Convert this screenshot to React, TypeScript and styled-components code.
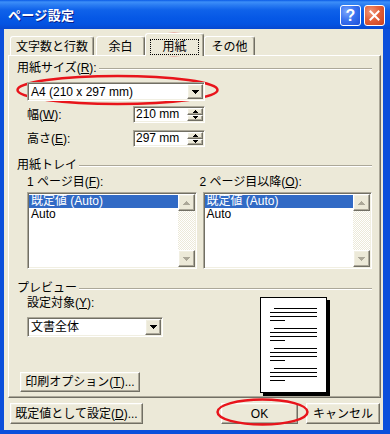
import React from 'react';
import styled, { createGlobalStyle, css } from 'styled-components';

const FONT = `"Liberation Sans", "Noto Sans CJK JP", sans-serif`;

const GlobalStyle = createGlobalStyle`
  html, body { margin: 0; padding: 0; background: #ffffff; }
  body { font-family: ${FONT}; font-size: 12px; }
  *, *::before, *::after { box-sizing: border-box; }
`;

const sunken = css`
  border: 1px solid;
  border-color: #aca899 #ffffff #ffffff #aca899;
  box-shadow: inset 1px 1px #716f64, inset -1px -1px #f1efe2;
`;

const raised = css`
  border: 1px solid;
  border-color: #ffffff #716f64 #716f64 #ffffff;
  box-shadow: inset -1px -1px #aca899, inset 1px 1px #f1efe2;
`;

const Window = styled.div`
  position: relative;
  width: 390px;
  height: 434px;
  background: #0b4fdb;
  display: flex;
  flex-direction: column;
  font-family: ${FONT};
  font-size: 12px;
  color: #000;
  overflow: hidden;
`;

const TitleBar = styled.div`
  height: 29px;
  flex: none;
  display: flex;
  align-items: center;
  padding: 2px 5px 0 8px;
  background: linear-gradient(
    180deg,
    #0a5ae6 0px,
    #3d8ff8 2px,
    #2a7cf2 5px,
    #0f62ea 10px,
    #0658e6 18px,
    #0454e2 24px,
    #0748d0 29px
  );
`;

const Title = styled.div`
  flex: 1;
  color: #fff;
  font-weight: bold;
  font-size: 13px;
  letter-spacing: 0.3px;
  line-height: 15px;
  text-shadow: 1px 1px #0a1e8a;
`;

const CaptionButton = styled.div<{ $variant: 'help' | 'close' }>`
  width: 21px;
  height: 21px;
  border: 1px solid #ffffff;
  border-radius: 3px;
  display: flex;
  align-items: center;
  justify-content: center;
  margin-left: ${(p) => (p.$variant === 'close' ? '3px' : '0')};
  background: ${(p) =>
    p.$variant === 'close'
      ? 'radial-gradient(circle at 30% 30%, #f0977a 0%, #e2613b 45%, #c8401d 100%)'
      : 'radial-gradient(circle at 30% 30%, #7aa5fb 0%, #3b73f0 45%, #1b4fd9 100%)'};
`;

const HelpMark = styled.span`
  color: #fff;
  font-family: "Liberation Sans", sans-serif;
  font-weight: bold;
  font-size: 16px;
  line-height: 16px;
`;

const Body = styled.div`
  flex: 1;
  background: #ece9d8;
  margin: 0 7px 4px 4px;
  padding-top: 4px;
  display: flex;
  flex-direction: column;
`;

const TabRow = styled.div`
  position: relative;
  z-index: 2;
  height: 22px;
  display: flex;
  align-items: flex-end;
  gap: 2px;
  padding-left: 6px;
`;

const Tab = styled.div<{ $w: number; $active?: boolean }>`
  width: ${(p) => p.$w}px;
  height: ${(p) => (p.$active ? 23 : 19)}px;
  margin: ${(p) => (p.$active ? '0 -2px -1px' : '0')};
  padding-top: ${(p) => (p.$active ? 5 : 3)}px;
  background: #ece9d8;
  border-top: 1px solid #ffffff;
  border-left: 1px solid #ffffff;
  border-right: 1px solid #716f64;
  border-radius: 3px 3px 0 0;
  box-shadow: inset -1px 0 #aca899;
  text-align: center;
  line-height: 14px;
  white-space: nowrap;
`;

const FocusRect = styled.span`
  display: inline-block;
  padding: 0 11px;
  border: 1px dotted #000;
  line-height: 14px;
`;

const Panel = styled.div`
  position: relative;
  z-index: 1;
  height: 343px;
  margin: 0 2px 0 4px;
  border-top: 1px solid #ffffff;
  border-left: 1px solid #ffffff;
  border-right: 1px solid #716f64;
  border-bottom: 1px solid #716f64;
  box-shadow: inset -1px -1px #aca899;
  padding: 5px 8px 0 8px;
  display: flex;
  flex-direction: column;
`;

const GroupHeader = styled.div<{ $mt?: number }>`
  display: flex;
  align-items: center;
  height: 14px;
  line-height: 14px;
  gap: 2px;
  margin-top: ${(p) => p.$mt ?? 0}px;
  white-space: nowrap;
  &::after {
    content: '';
    flex: 1;
    margin-top: 2px;
    border-top: 1px solid #aca899;
    border-bottom: 1px solid #ffffff;
  }
`;

const Combo = styled.div<{ $w: number; $h: number; $mt: number }>`
  ${sunken};
  width: ${(p) => p.$w}px;
  height: ${(p) => p.$h}px;
  margin: ${(p) => p.$mt}px 0 0 10px;
  background: #fff;
  display: flex;
  align-items: center;
  padding: 0 1px 0 3px;
  line-height: 14px;
  white-space: nowrap;
`;

const ComboText = styled.span`
  flex: 1;
`;

const DropButton = styled.div`
  ${raised};
  width: 16px;
  align-self: stretch;
  margin: 1px 0;
  background: #ece9d8;
  display: flex;
  align-items: center;
  justify-content: center;
`;

const SizeRow = styled.div<{ $mt: number }>`
  display: flex;
  align-items: center;
  height: 17px;
  margin: ${(p) => p.$mt}px 0 0 10px;
  line-height: 14px;
`;

const SizeLabel = styled.div`
  width: 106px;
`;

const SpinBox = styled.div`
  ${sunken};
  width: 72px;
  height: 17px;
  background: #fff;
  display: flex;
  align-items: stretch;
  padding: 1px 1px 1px 2px;
  line-height: 13px;
`;

const SpinText = styled.span`
  flex: 1;
  align-self: center;
`;

const SpinButtons = styled.div`
  width: 16px;
  display: flex;
  flex-direction: column;
`;

const SpinButton = styled.div`
  ${raised};
  flex: 1;
  background: #ece9d8;
  display: flex;
  align-items: center;
  justify-content: center;
`;

const TrayRow = styled.div`
  display: flex;
  gap: 6px;
  margin: 3px 0 0 10px;
`;

const TrayColumn = styled.div`
  width: 170px;
  display: flex;
  flex-direction: column;
  gap: 3px;
`;

const FieldLabel = styled.div<{ $ml?: number; $mt?: number }>`
  height: 14px;
  line-height: 14px;
  white-space: nowrap;
  margin-left: ${(p) => p.$ml ?? 0}px;
  margin-top: ${(p) => p.$mt ?? 0}px;
`;

const ListBox = styled.div`
  ${sunken};
  height: 77px;
  background: #fff;
  display: flex;
  padding: 1px;
`;

const ListItems = styled.div`
  flex: 1;
  padding-top: 1px;
`;

const ListItem = styled.div<{ $selected?: boolean }>`
  height: 13px;
  line-height: 13px;
  padding-left: 2px;
  white-space: nowrap;
  background: ${(p) => (p.$selected ? '#316ac5' : 'transparent')};
  color: ${(p) => (p.$selected ? '#ffffff' : '#000000')};
`;

const ScrollBar = styled.div`
  width: 17px;
  display: flex;
  flex-direction: column;
`;

const ScrollButton = styled.div`
  ${raised};
  height: 17px;
  background: #ece9d8;
  display: flex;
  align-items: center;
  justify-content: center;
`;

const ScrollTrack = styled.div`
  flex: 1;
  background-color: #ffffff;
  background-image: conic-gradient(#ece9d8 25%, #ffffff 0 50%, #ece9d8 0 75%, #ffffff 0);
  background-size: 2px 2px;
`;

const PreviewRow = styled.div`
  display: flex;
`;

const PreviewLeft = styled.div`
  width: 243px;
  display: flex;
  flex-direction: column;
`;

const Button = styled.div<{ $w: number; $h: number; $mt?: number; $ml?: number }>`
  ${raised};
  width: ${(p) => p.$w}px;
  height: ${(p) => p.$h}px;
  margin-top: ${(p) => p.$mt ?? 0}px;
  margin-left: ${(p) => p.$ml ?? 0}px;
  background: #ece9d8;
  display: flex;
  align-items: center;
  justify-content: center;
  line-height: 14px;
  white-space: nowrap;
`;

const PreviewPage = styled.div`
  width: 67px;
  height: 96px;
  margin-top: 2px;
  background: #fff;
  border: 1px solid #000;
  box-shadow: 3px 3px 0 #000;
`;

const ButtonBar = styled.div`
  display: flex;
  align-items: center;
  margin-top: 5px;
  padding: 0 3px 0 6px;
`;

const Spacer = styled.div`
  flex: 1;
`;

const Annotations = styled.svg`
  position: absolute;
  left: 0;
  top: 0;
  pointer-events: none;
`;

const DownArrow = ({ color = '#000' }: { color?: string }) => (
  <svg width="7" height="4" viewBox="0 0 7 4" shapeRendering="crispEdges">
    <path fill={color} d="M0 0h7v1H0zM1 1h5v1H1zM2 2h3v1H2zM3 3h1v1H3z" />
  </svg>
);

const UpArrow = ({ color = '#000' }: { color?: string }) => (
  <svg width="7" height="4" viewBox="0 0 7 4" shapeRendering="crispEdges">
    <path fill={color} d="M0 3h7v1H0zM1 2h5v1H1zM2 1h3v1H2zM3 0h1v1H3z" />
  </svg>
);

const SmallUp = () => (
  <svg width="5" height="3" viewBox="0 0 5 3" shapeRendering="crispEdges">
    <path fill="#000" d="M0 2h5v1H0zM1 1h3v1H1zM2 0h1v1H2z" />
  </svg>
);

const SmallDown = () => (
  <svg width="5" height="3" viewBox="0 0 5 3" shapeRendering="crispEdges">
    <path fill="#000" d="M0 0h5v1H0zM1 1h3v1H1zM2 2h1v1H2z" />
  </svg>
);

const PageLines = () => {
  const groups = [0, 20, 40, 60];
  return (
    <svg width="65" height="94" viewBox="0 0 65 94" shapeRendering="crispEdges">
      {groups.map((g) => (
        <g key={g} fill="#000">
          <rect x="13" y={10 + g} width="43" height="1" />
          <rect x="9" y={14 + g} width="47" height="1" />
          <rect x="9" y={18 + g} width="47" height="1" />
          <rect x="9" y={22 + g} width="15" height="1" />
        </g>
      ))}
    </svg>
  );
};

const ListWithScroll = () => (
  <ListBox>
    <ListItems>
      <ListItem $selected>既定値 (Auto)</ListItem>
      <ListItem>Auto</ListItem>
    </ListItems>
    <ScrollBar>
      <ScrollButton>
        <UpArrow color="#aca899" />
      </ScrollButton>
      <ScrollTrack />
      <ScrollButton>
        <DownArrow color="#aca899" />
      </ScrollButton>
    </ScrollBar>
  </ListBox>
);

export default function App() {
  return (
    <>
      <GlobalStyle />
      <Window>
        <TitleBar>
          <Title>ページ設定</Title>
          <CaptionButton $variant="help">
            <HelpMark>?</HelpMark>
          </CaptionButton>
          <CaptionButton $variant="close">
            <svg width="11" height="11" viewBox="0 0 11 11">
              <path d="M1.5 1.5L9.5 9.5M9.5 1.5L1.5 9.5" stroke="#fff" strokeWidth="2" strokeLinecap="square" />
            </svg>
          </CaptionButton>
        </TitleBar>
        <Body>
          <TabRow>
            <Tab $w={84}>文字数と行数</Tab>
            <Tab $w={49}>余白</Tab>
            <Tab $w={59} $active>
              <FocusRect>用紙</FocusRect>
            </Tab>
            <Tab $w={51}>その他</Tab>
          </TabRow>
          <Panel>
            <GroupHeader>
              <span>
                用紙サイズ(<u>R</u>):
              </span>
            </GroupHeader>
            <Combo $w={178} $h={19} $mt={7}>
              <ComboText>A4 (210 x 297 mm)</ComboText>
              <DropButton>
                <DownArrow />
              </DropButton>
            </Combo>
            <SizeRow $mt={5}>
              <SizeLabel>
                幅(<u>W</u>):
              </SizeLabel>
              <SpinBox>
                <SpinText>210 mm</SpinText>
                <SpinButtons>
                  <SpinButton>
                    <SmallUp />
                  </SpinButton>
                  <SpinButton>
                    <SmallDown />
                  </SpinButton>
                </SpinButtons>
              </SpinBox>
            </SizeRow>
            <SizeRow $mt={7}>
              <SizeLabel>
                高さ(<u>E</u>):
              </SizeLabel>
              <SpinBox>
                <SpinText>297 mm</SpinText>
                <SpinButtons>
                  <SpinButton>
                    <SmallUp />
                  </SpinButton>
                  <SpinButton>
                    <SmallDown />
                  </SpinButton>
                </SpinButtons>
              </SpinBox>
            </SizeRow>
            <GroupHeader $mt={11}>
              <span>用紙トレイ</span>
            </GroupHeader>
            <TrayRow>
              <TrayColumn>
                <FieldLabel>
                  1 ページ目(<u>F</u>):
                </FieldLabel>
                <ListWithScroll />
              </TrayColumn>
              <TrayColumn>
                <FieldLabel $ml={-3}>
                  2 ページ目以降(<u>O</u>):
                </FieldLabel>
                <ListWithScroll />
              </TrayColumn>
            </TrayRow>
            <GroupHeader $mt={12}>
              <span>プレビュー</span>
            </GroupHeader>
            <PreviewRow>
              <PreviewLeft>
                <FieldLabel $ml={10} $mt={1}>
                  設定対象(<u>Y</u>):
                </FieldLabel>
                <Combo $w={136} $h={20} $mt={7}>
                  <ComboText>文書全体</ComboText>
                  <DropButton>
                    <DownArrow />
                  </DropButton>
                </Combo>
                <Button $w={120} $h={20} $mt={35} $ml={3}>
                  印刷オプション(<u>T</u>)...
                </Button>
              </PreviewLeft>
              <PreviewPage>
                <PageLines />
              </PreviewPage>
            </PreviewRow>
          </Panel>
          <ButtonBar>
            <Button $w={133} $h={21}>
              既定値として設定(<u>D</u>)...
            </Button>
            <Spacer />
            <Button $w={77} $h={21}>
              OK
            </Button>
            <Button $w={74} $h={21} $ml={8}>
              キャンセル
            </Button>
          </ButtonBar>
        </Body>
        <Annotations width="390" height="434" viewBox="0 0 390 434">
          <g fill="none" stroke="#e8141b" strokeWidth="2.5">
            <ellipse cx="174" cy="44.5" rx="30.5" ry="10.5" />
            <ellipse cx="117.5" cy="90" rx="100" ry="14" />
            <ellipse cx="262.5" cy="412" rx="45" ry="12.5" />
          </g>
        </Annotations>
      </Window>
    </>
  );
}
